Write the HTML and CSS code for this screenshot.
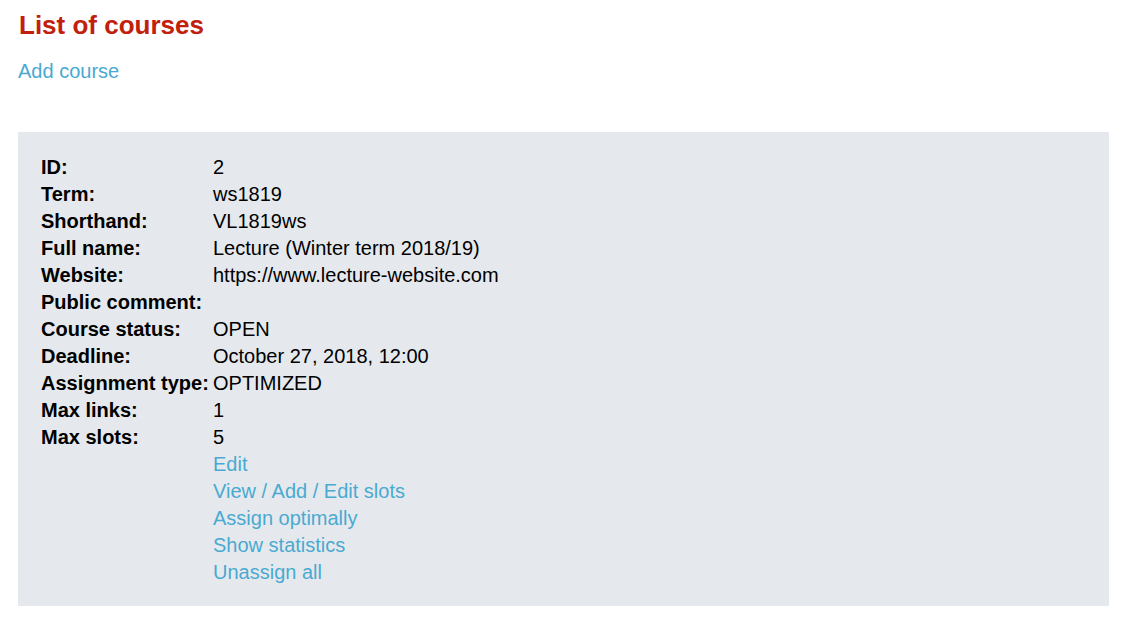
FILE: index.html
```html
<!DOCTYPE html>
<html lang="en">
<head>
<meta charset="utf-8">
<title>List of courses</title>
<link rel="stylesheet" href="styles.css">
</head>
<body>
<main class="page">
  <h1 class="title">List of courses</h1>
  <a class="link add-link" href="#">Add course</a>
  <section class="course">
    <table class="course-table">
      <tbody>
        <tr><th>ID:</th><td>2</td></tr>
        <tr><th>Term:</th><td>ws1819</td></tr>
        <tr><th>Shorthand:</th><td>VL1819ws</td></tr>
        <tr><th>Full name:</th><td>Lecture (Winter term 2018/19)</td></tr>
        <tr><th>Website:</th><td>https://www.lecture-website.com</td></tr>
        <tr><th>Public comment:</th><td></td></tr>
        <tr><th>Course status:</th><td>OPEN</td></tr>
        <tr><th>Deadline:</th><td>October 27, 2018, 12:00</td></tr>
        <tr><th>Assignment type:</th><td>OPTIMIZED</td></tr>
        <tr><th>Max links:</th><td>1</td></tr>
        <tr><th>Max slots:</th><td>5</td></tr>
        <tr><th></th><td><a class="link" href="#">Edit</a></td></tr>
        <tr><th></th><td><a class="link" href="#">View / Add / Edit slots</a></td></tr>
        <tr><th></th><td><a class="link" href="#">Assign optimally</a></td></tr>
        <tr><th></th><td><a class="link" href="#">Show statistics</a></td></tr>
        <tr><th></th><td><a class="link" href="#">Unassign all</a></td></tr>
      </tbody>
    </table>
  </section>
</main>
</body>
</html>
```

FILE: styles.css
```css
html, body {
  margin: 0;
  padding: 0;
  background: #ffffff;
}

body {
  font-family: "Liberation Sans", Arial, sans-serif;
  font-size: 20px;
  color: #000000;
}

.page {
  padding: 10px 18px 0 18px;
  display: flex;
  flex-direction: column;
  align-items: flex-start;
}

.title {
  margin: 0;
  font-size: 26px;
  line-height: 30px;
  font-weight: bold;
  color: #c1200c;
  padding-left: 1px;
}

.link {
  color: #4aa9d1;
  text-decoration: none;
}

.add-link {
  display: block;
  margin-top: 20px;
  line-height: 23px;
}

.course {
  align-self: stretch;
  margin-top: 49px;
  background: #e5e9ed;
  padding: 22px 22px 20px 22px;
}

.course-table {
  border-collapse: collapse;
  border-spacing: 0;
}

.course-table th,
.course-table td {
  padding: 0;
  height: 27px;
  line-height: 27px;
  vertical-align: top;
  text-align: left;
  white-space: nowrap;
}

.course-table th {
  font-weight: bold;
  width: 172px;
  padding-left: 1px;
}
```
